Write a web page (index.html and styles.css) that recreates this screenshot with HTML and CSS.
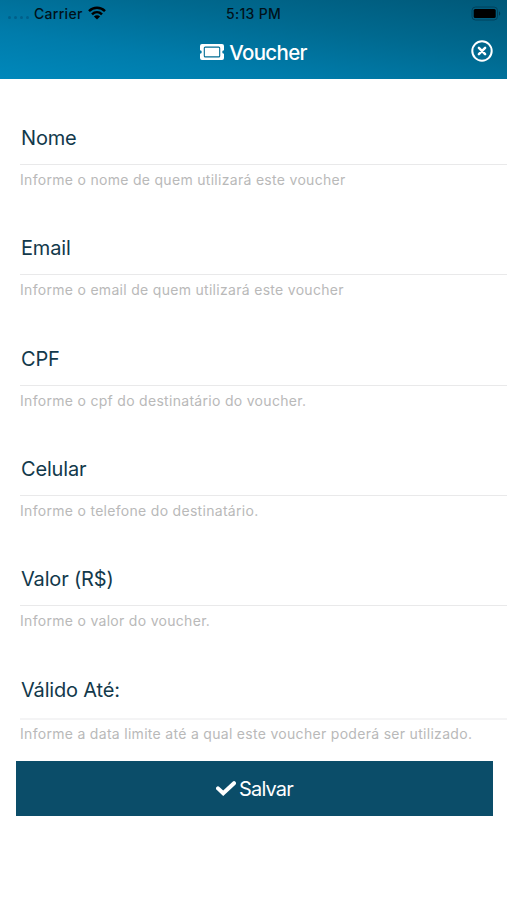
FILE: index.html
```html
<!DOCTYPE html>
<html lang="pt-BR">
<head>
<meta charset="utf-8">
<title>Voucher</title>
<link rel="stylesheet" href="styles.css">
</head>
<body>
<header class="header">
  <div class="status">
    <div class="status-left">
      <span class="dots"><i></i><i></i><i></i><i></i></span>
      <span class="carrier">Carrier</span>
      <svg class="wifi" viewBox="0 0 18 14" width="18" height="14">
        <g fill="none" stroke="#000" stroke-width="2.5">
          <path d="M1 5.1C5.5.7 12.5.7 17 5.1"/>
          <path d="M4 8.3c2.9-2.8 7.1-2.8 10 0"/>
        </g>
        <path d="M9 13.6 5.9 10.5c1.8-1.7 4.400-1.700 6.200 0z"/>
      </svg>
    </div>
    <span class="time">5:13 PM</span>
    <div class="status-right">
      <svg class="battery" viewBox="0 0 30 15" width="30" height="15">
        <rect x="1" y="1" width="25.5" height="13" rx="3.5" fill="none" stroke="#003a50" stroke-opacity=".75"/>
        <rect x="2.7" y="3" width="22" height="9" rx="1.5"/>
        <path d="M28 5.3c1.700.800 1.700 3.600 0 4.400z" fill="#003a50"/>
      </svg>
    </div>
  </div>
  <div class="bar">
    <h1 class="title">
      <svg class="ticket" viewBox="0 0 24 16" width="24" height="16">
        <path fill="#fff" d="M2 0h20a2 2 0 0 1 2 2v4.200a1.800 1.800 0 0 0 0 3.600V14a2 2 0 0 1-2 2H2a2 2 0 0 1-2-2V9.800a1.800 1.800 0 0 0 0-3.600V2a2 2 0 0 1 2-2z"/>
        <rect x="4.300" y="3.100" width="15.400" height="9.800" rx="1" fill="none" stroke="#006c94" stroke-width="1.100"/>
      </svg>
      <span class="title-text">Voucher</span>
    </h1>
    <button class="close" aria-label="Fechar">
      <svg viewBox="0 0 22 22" width="22" height="22" fill="none" stroke="#fff">
        <circle cx="11" cy="11" r="9.700" stroke-width="2"/>
        <path d="m7.900 7.900 6.200 6.200m0-6.200-6.200 6.200" stroke-width="2.500" stroke-linecap="round"/>
      </svg>
    </button>
  </div>
</header>
<main class="form">
  <div class="field"><div class="label">Nome</div><p class="hint">Informe o nome de quem utilizará este voucher</p></div>
  <div class="field"><div class="label">Email</div><p class="hint">Informe o email de quem utilizará este voucher</p></div>
  <div class="field"><div class="label">CPF</div><p class="hint">Informe o cpf do destinatário do voucher.</p></div>
  <div class="field"><div class="label">Celular</div><p class="hint">Informe o telefone do destinatário.</p></div>
  <div class="field"><div class="label">Valor (R$)</div><p class="hint">Informe o valor do voucher.</p></div>
  <div class="field field-date"><div class="label">Válido Até:</div><p class="hint">Informe a data limite até a qual este voucher poderá ser utilizado.</p></div>
  <button class="save">
    <svg viewBox="0 0 20 15" width="20" height="15"><path d="m2 7.400 5.200 4.900L18 2.200" fill="none" stroke="#fff" stroke-width="4" stroke-linecap="round"/></svg>
    <span>Salvar</span>
  </button>
</main>
</body>
</html>
```

FILE: styles.css
```css
* { box-sizing: border-box; }
body {
  margin: 0;
  min-height: 900px;
  background: #fff;
  font-family: Inter, "Liberation Sans", sans-serif;
}
button { border: 0; padding: 0; font-family: inherit; background: none; }
svg { display: block; flex: none; }
.header {
  height: 79px;
  background: linear-gradient(9deg, #0088bb 0%, #007cab 30%, #00698f 65%, #005878 100%);
}
.status {
  display: grid;
  grid-template-columns: 1fr auto 1fr;
  align-items: center;
  height: 26px;
  font-size: 14px;
  font-weight: 500;
  color: #00121a;
}
.status-left { display: flex; align-items: center; padding-left: 8px; }
.dots { display: flex; gap: 3px; width: 26px; padding-top: 8px; }
.dots i { width: 3px; height: 3px; border-radius: 50%; background: #00608a; }
.carrier { letter-spacing: 0.3px; }
.time { letter-spacing: 0.3px; }
.wifi { margin-left: 5px; }
.status-right { display: flex; justify-content: flex-end; padding-right: 6px; }
.bar {
  display: grid;
  grid-template-columns: 48px 1fr 48px;
  height: 53px;
  align-items: center;
}
.title {
  grid-column: 2;
  display: flex;
  align-items: center;
  justify-content: center;
  gap: 5px;
  margin: 0;
  color: #fff;
  font-size: 20.5px;
  letter-spacing: -0.65px;
  line-height: 52px;
  font-weight: 500;
}
.ticket { margin-top: -2px; }
.close { display: flex; justify-content: flex-end; padding: 0 14px 3px 0; }
.form { padding-top: 31px; }
.field { height: 110.35px; padding-left: 20px; }
.label {
  height: 55px;
  padding: 2px 0 0 1px;
  border-bottom: 1px solid #e9e9ea;
  color: #12394b;
  font-size: 20px;
  letter-spacing: -0.18px;
  line-height: 52px;
}
.hint {
  margin: 0;
  color: #b9b9b9;
  font-size: 14px;
  line-height: 30px;
  letter-spacing: 0.3px;
}
.field-date { height: 99.25px; }
.field-date .label { height: 58px; border-bottom: 2px solid #f4f4f5; }
.field-date .hint { line-height: 28px; }
.save {
  display: flex;
  align-items: center;
  justify-content: center;
  gap: 3px;
  width: 477px;
  height: 55px;
  margin-left: 15.5px;
  padding: 1px 0 0 1px;
  background: #0b4d69;
  color: #fff;
  font-size: 20px;
  letter-spacing: -0.85px;
}
```
